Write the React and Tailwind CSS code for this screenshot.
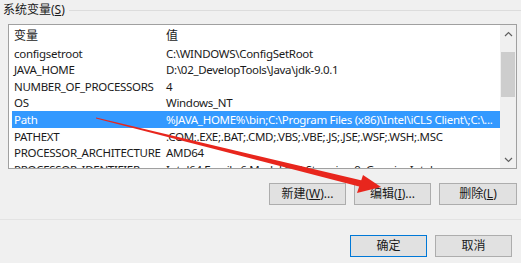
import React from "react";

const rows = [
  ["configsetroot", "C:\\WINDOWS\\ConfigSetRoot"],
  ["JAVA_HOME", "D:\\02_DevelopTools\\Java\\jdk-9.0.1"],
  ["NUMBER_OF_PROCESSORS", "4"],
  ["OS", "Windows_NT"],
  ["Path", "%JAVA_HOME%\\bin;C:\\Program Files (x86)\\Intel\\iCLS Client\\;C:\\..."],
  ["PATHEXT", ".COM;.EXE;.BAT;.CMD;.VBS;.VBE;.JS;.JSE;.WSF;.WSH;.MSC"],
  ["PROCESSOR_ARCHITECTURE", "AMD64"],
  ["PROCESSOR_IDENTIFIER", "Intel64 Family 6 Model 142 Stepping 9, GenuineIntel"],
];

function Btn({ children, primary, className = "" }) {
  return (
    <div
      className={`h-[22px] w-[77px] flex items-center justify-center bg-[#e1e1e1] border ${
        primary ? "border-[#0078d7]" : "border-[#adadad]"
      } text-[12px] text-[#1a1a1a] ${className}`}
    >
      {children}
    </div>
  );
}

export default function App() {
  return (
    <div
      className="relative w-[521px] h-[263px] overflow-hidden bg-[#f0f0f0] text-[#1a1a1a] flex flex-col"
      style={{ fontFamily: '"Noto Sans", "Noto Sans CJK SC", sans-serif' }}
    >
      <div className="h-[20px] flex items-center">
        <span className="pl-[3px] pr-[4px] text-[12px] leading-none">
          系统变量(<span className="underline">S</span>)
        </span>
        <div className="flex-1 border-t border-[#dcdcdc] mt-[1px]" />
      </div>

      <div className="ml-[8px] mr-[4px] mt-[4px] h-[145px] border border-[#a0a0a0] bg-white flex overflow-hidden">
        <div className="flex-1 overflow-hidden text-[11.5px] tracking-[-0.3px]">
          <div className="h-[20px] flex items-end pl-[5px] text-[12px] tracking-normal">
            <span className="w-[152px]">变量</span>
            <span>值</span>
          </div>
          {rows.map(([k, v]) => {
            const sel = k === "Path";
            return (
              <div
                key={k}
                className={`h-[16.6px] flex items-center whitespace-nowrap ml-[3px] pl-[2px] ${
                  sel ? "bg-[#3399ff] text-white" : ""
                }`}
              >
                <span className="w-[152px] shrink-0">{k}</span>
                <span>{v}</span>
              </div>
            );
          })}
        </div>
        <div className="w-[16px] bg-[#f0f0f0] flex flex-col">
          <div className="h-[17px] flex items-center justify-center">
            <svg width="9" height="6" viewBox="0 0 9 6">
              <path d="M1 5 L4.5 1.5 L8 5" fill="none" stroke="#606060" strokeWidth="1.2" />
            </svg>
          </div>
          <div className="mt-[10px] h-[45px] mx-[1px] bg-[#cdcdcd]" />
          <div className="flex-1" />
          <div className="h-[17px] flex items-center justify-center">
            <svg width="9" height="6" viewBox="0 0 9 6">
              <path d="M1 1 L4.5 4.5 L8 1" fill="none" stroke="#606060" strokeWidth="1.2" />
            </svg>
          </div>
        </div>
      </div>

      <div className="mt-[14px] flex justify-end gap-[8px] pr-[4px]">
        <Btn>
          新建(<span className="underline">W</span>)...
        </Btn>
        <Btn>
          编辑(<span className="underline">I</span>)...
        </Btn>
        <Btn className="w-[78px]">
          删除(<span className="underline">L</span>)
        </Btn>
      </div>

      <div className="mt-[14px] border-t border-[#e3e3e3]" />

      <div className="mt-[15px] flex justify-end gap-[8px] pr-[9px]">
        <Btn primary>确定</Btn>
        <Btn>取消</Btn>
      </div>

      <svg className="absolute left-0 top-0" width="521" height="263" viewBox="0 0 521 263">
        <polygon points="96,117.5 362,180.5 361,187 96,118.5" fill="#e8261d" />
        <polygon points="381,187 357,193 363,175" fill="#e8261d" />
      </svg>
    </div>
  );
}
